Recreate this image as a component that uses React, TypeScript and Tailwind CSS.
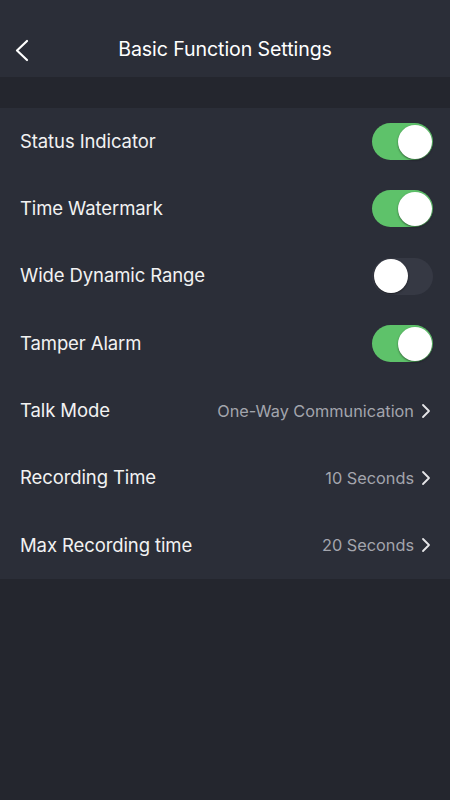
import React from "react";

type Row =
  | { label: string; kind: "toggle"; on: boolean }
  | { label: string; kind: "value"; value: string };

const rows: Row[] = [
  { label: "Status Indicator", kind: "toggle", on: true },
  { label: "Time Watermark", kind: "toggle", on: true },
  { label: "Wide Dynamic Range", kind: "toggle", on: false },
  { label: "Tamper Alarm", kind: "toggle", on: true },
  { label: "Talk Mode", kind: "value", value: "One-Way Communication" },
  { label: "Recording Time", kind: "value", value: "10 Seconds" },
  { label: "Max Recording time", kind: "value", value: "20 Seconds" },
];

function Toggle({ on }: { on: boolean }) {
  return (
    <div
      className={`flex h-[37px] w-[61px] items-center rounded-full px-[1.5px] ${
        on ? "justify-end bg-[#5ec26a]" : "justify-start bg-[#363944]"
      }`}
    >
      <div className="h-[34px] w-[34px] rounded-full bg-white shadow-[0_1px_2px_rgba(0,0,0,0.5)]" />
    </div>
  );
}

function Chevron({ className }: { className?: string }) {
  return (
    <svg width="10" height="16" viewBox="0 0 10 16" className={className} fill="none">
      <path d="M2 2l6 6-6 6" stroke="currentColor" strokeWidth="1.8" strokeLinecap="round" strokeLinejoin="round" />
    </svg>
  );
}

export default function App() {
  return (
    <div
      className="flex min-h-[800px] w-[450px] flex-col bg-[#24262e] text-white"
      style={{ fontFamily: "Inter, Roboto, 'Noto Sans', sans-serif" }}
    >
      <div className="relative flex h-[77px] items-center justify-center bg-[#2b2e38] pt-[23px]">
        <svg
          width="16"
          height="26"
          viewBox="0 0 16 26"
          fill="none"
          className="absolute left-[14px] top-[38px]"
        >
          <path d="M13 3L3 12.5 13 22" stroke="white" strokeWidth="2.2" strokeLinecap="round" strokeLinejoin="round" />
        </svg>
        <span className="text-[19.6px] tracking-[-0.1px]">Basic Function Settings</span>
      </div>
      <div className="h-[31px]" />
      <div className="flex flex-col bg-[#2b2e38]">
        {rows.map((r) => (
          <div key={r.label} className="flex h-[67.3px] items-center justify-between pl-[20px] pr-[17px]">
            <span className="text-[18.5px] tracking-[-0.1px] text-[#f2f2f2]">{r.label}</span>
            {r.kind === "toggle" ? (
              <Toggle on={r.on} />
            ) : (
              <div className="flex items-center gap-[7px] pr-[2px] text-[#a3a5ad]">
                <span className="text-[16.3px]">{r.value}</span>
                <Chevron className="text-[#e6e6e8]" />
              </div>
            )}
          </div>
        ))}
      </div>
    </div>
  );
}
